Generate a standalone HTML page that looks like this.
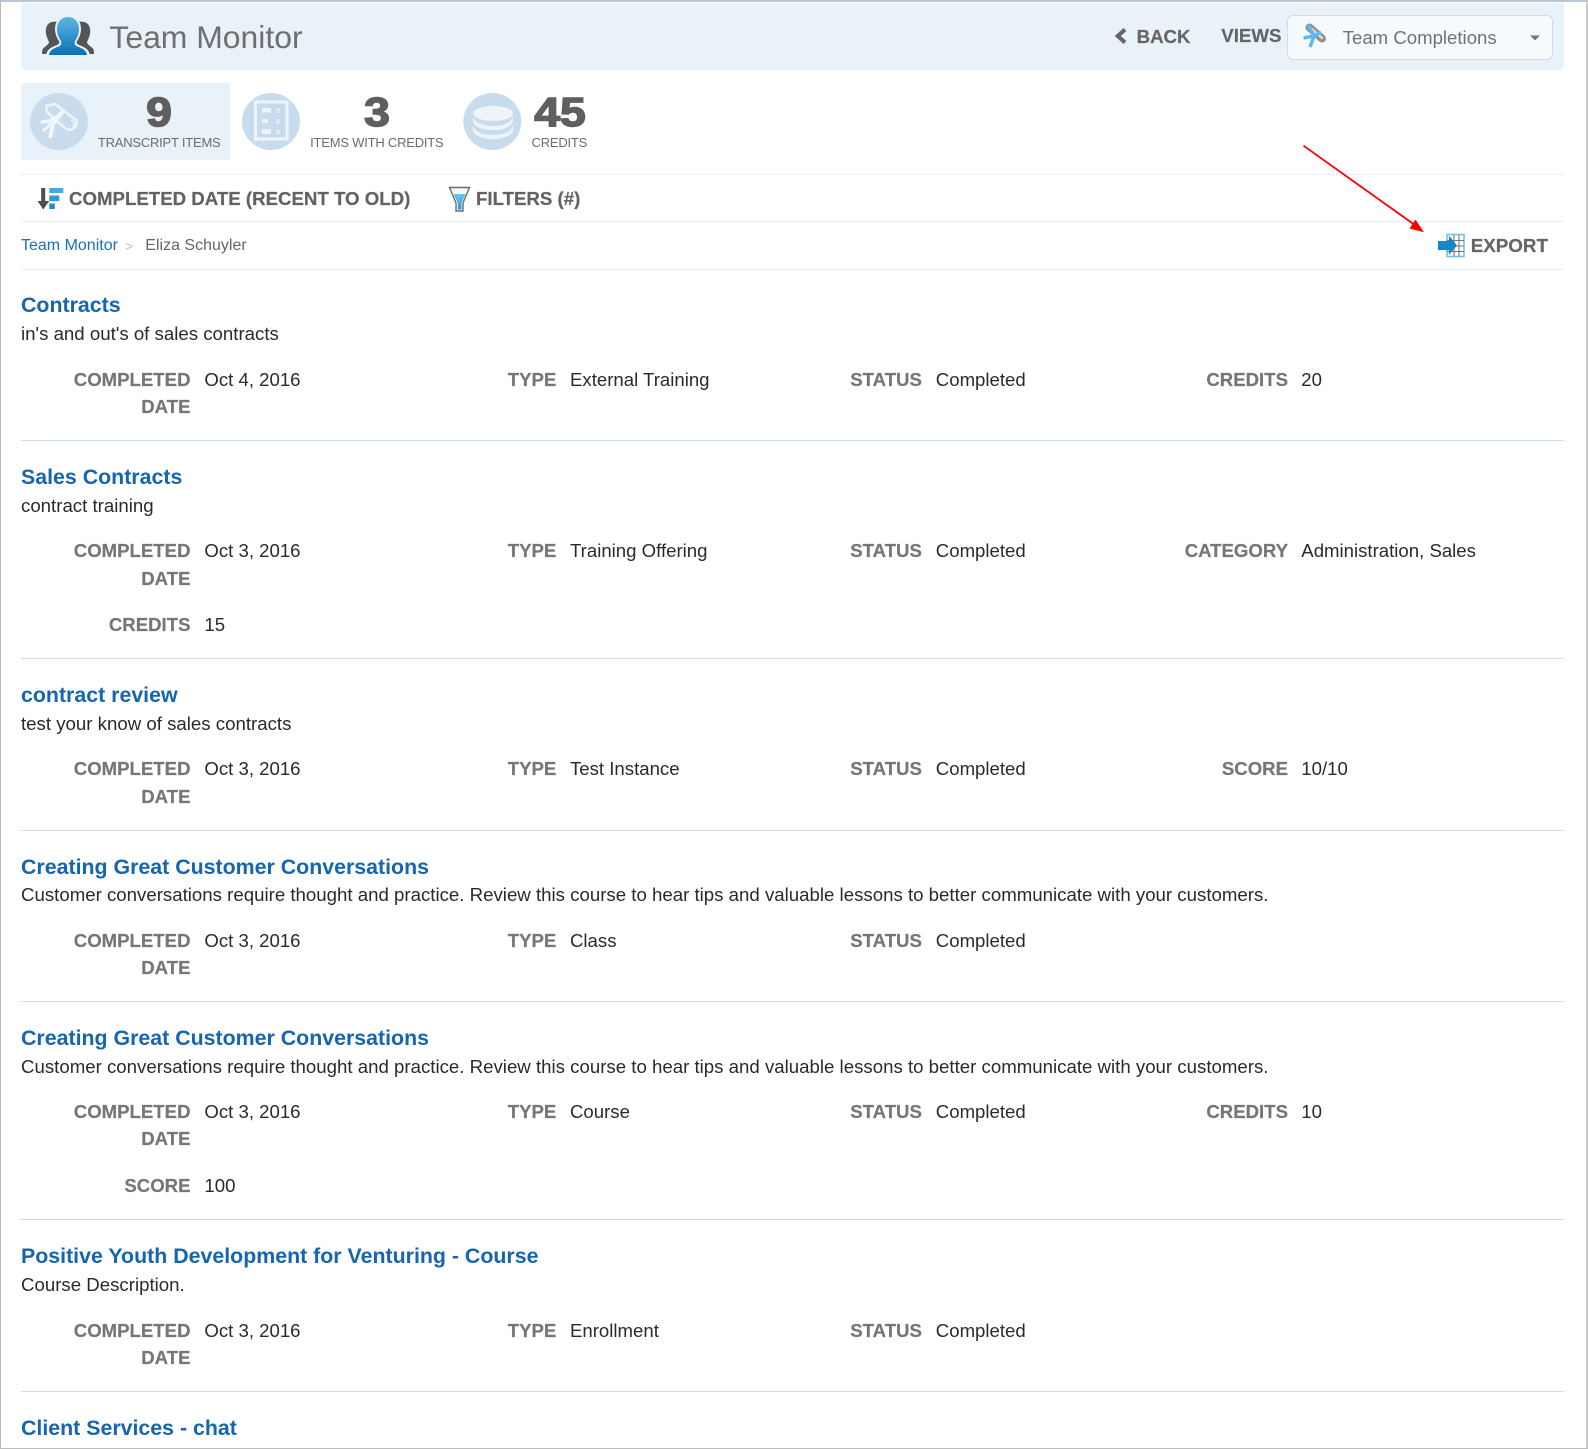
<!DOCTYPE html>
<html><head><meta charset="utf-8"><title>Team Monitor</title>
<style>
html,body{margin:0;padding:0;width:1588px;height:1449px;overflow:hidden;background:#fff}
body{position:relative;font-family:"Liberation Sans",Arial,sans-serif}
.a,.i>span,.a2{position:absolute;white-space:nowrap;line-height:0}
.b{position:absolute}
.i{position:absolute;left:0;width:1588px;height:1px}
.hr{position:absolute;left:21px;width:1543px;height:1px;background:#cfdfee}
.t{left:21px;top:36.6px;font-size:21.35px;font-weight:bold;color:#1565b0}
.d{left:21px;top:65.3px;font-size:18.65px;color:#2a2a2a}
.l{font-size:18.6px;font-weight:bold;color:#767676;transform:translateX(-100%);-webkit-text-stroke:.2px #767676}
.v{font-size:18.6px;color:#2a2a2a}
.c1{left:190.5px}.c2{left:556.3px}.c3{left:921.9px}.c4{left:1288px}
.w1{left:204.4px}.w2{left:570px}.w3{left:935.8px}.w4{left:1301.3px}
.r1{top:111px}.r2{top:137.8px}.r3{top:185px}
.p{margin-top:1px}.m{margin-top:-1px}
.sep{position:absolute;left:21px;width:1543px;height:1px;background:#e8eff6}
.num{font-size:41px;font-weight:bold;color:#5f5f5f;-webkit-text-stroke:1.5px #5f5f5f;transform:translateX(-50%) scaleX(1.13)}
.lab{font-size:13px;letter-spacing:-.22px;color:#6c6c6c;transform:translateX(-50%)}
.bold{font-size:18.67px;font-weight:bold;color:#626262;-webkit-text-stroke:.2px #626262}
</style></head>
<body>
<div class="b" style="left:0;top:0;width:1588px;height:2px;background:#b9c7d5"></div>
<div class="b" style="left:0;top:0;width:1px;height:1449px;background:#bbb"></div>
<div class="b" style="left:1586px;top:0;width:2px;height:1449px;background:#c9c9c9"></div>
<div class="b" style="left:0;top:1448px;width:1588px;height:1px;background:#bbb"></div>

<div class="b" style="left:21px;top:3px;width:1543px;height:67px;background:#e9f1f9;border-radius:0 0 5px 5px"></div>
<span class="a" style="left:109.4px;top:36.8px;font-size:31.9px;color:#6f6f6f">Team Monitor</span>
<span class="a bold" style="left:1136.6px;top:37.3px;color:#666">BACK</span>
<span class="a bold" style="left:1221.3px;top:36.3px;color:#666">VIEWS</span>
<div class="b" style="left:1287px;top:15px;width:264px;height:43px;background:#f7fafd;border:1px solid #d5dce4;border-radius:6px"></div>
<span class="a" style="left:1342.7px;top:38.2px;font-size:18.6px;color:#6f7377">Team Completions</span>

<div class="b" style="left:21px;top:83px;width:209px;height:77px;background:#e9f1f9"></div>
<span class="a num" style="left:159.3px;top:112px">9</span>
<span class="a lab" style="left:159.2px;top:143px">TRANSCRIPT ITEMS</span>
<span class="a num" style="left:376.5px;top:112px">3</span>
<span class="a lab" style="left:376.8px;top:143px">ITEMS WITH CREDITS</span>
<span class="a num" style="left:559.5px;top:112px">45</span>
<span class="a lab" style="left:559.3px;top:143px">CREDITS</span>

<div class="sep" style="top:174px"></div>
<div class="sep" style="top:221px"></div>
<div class="sep" style="top:269px"></div>
<span class="a bold" style="left:69px;top:199.3px">COMPLETED DATE (RECENT TO OLD)</span>
<span class="a bold" style="left:476px;top:199.3px">FILTERS (#)</span>
<span class="a" style="left:21px;top:246.3px;font-size:16px;color:#1a6fb8">Team Monitor</span>
<span class="a" style="left:125px;top:246.3px;font-size:14px;color:#c4c4c4">&gt;</span>
<span class="a" style="left:145.3px;top:246.3px;font-size:16px;color:#666">Eliza Schuyler</span>
<span class="a bold" style="left:1470.7px;top:246.3px;font-size:18.8px;color:#666">EXPORT</span>

<svg class="b" style="left:0;top:0" width="1588" height="1449" viewBox="0 0 1588 1449">
<defs>
<linearGradient id="g1" x1="0" y1="0" x2="0" y2="1"><stop offset="0" stop-color="#5cb6e2"/><stop offset="1" stop-color="#0a72b6"/></linearGradient>
<linearGradient id="g2" x1="0" y1="0" x2="0" y2="1"><stop offset="0" stop-color="#6cc6f0"/><stop offset="1" stop-color="#2a98d6"/></linearGradient>
</defs>
<!-- people -->
<path d="M52 22c-5 1-7 6-6 12 1 4 2 6 3 8 0 2-2 3-4 5-2 1-3 3-3 6v1h22V24c-3-2-8-3-12-2z" fill="#565656"/>
<path d="M84 22c5 1 7 6 6 12-1 4-2 6-3 8 0 2 2 3 4 5 2 1 3 3 3 6v1H72V24c3-2 8-3 12-2z" fill="#565656"/>
<path d="M68 16c-7 0-12 5-12 13 0 5 2 9 4 12 1 2 0 4-3 5-5 2-9 4-10 9h42c-1-5-5-7-10-9-3-1-4-3-3-5 2-3 4-7 4-12 0-8-5-13-12-13z" fill="#eaf2f9" stroke="#eaf2f9" stroke-width="2"/>
<path d="M68 17c-6.500 0-11 5-11 12 0 5 2 9 4 12 1 3 0 5-4 6-4 2-7 3-8 8h38c-1-5-4-6-8-8-4-1-5-3-4-6 2-3 4-7 4-12 0-7-4.500-12-11-12z" fill="url(#g1)"/>
<!-- circles -->
<ellipse cx="59" cy="121.500" rx="29" ry="28.500" fill="#c9dcee"/>
<ellipse cx="271" cy="121.500" rx="29" ry="28.500" fill="#c9dcee"/>
<ellipse cx="492.300" cy="121.500" rx="29" ry="28.500" fill="#c9dcee"/>
<!-- certificate -->
<path d="M46 106L55 104L76 120Q78 126 72 129Q69 131 65 128L47 112Z" fill="none" stroke="#eef4fa" stroke-width="2.500"/>
<path d="M71 121c3 0 4 3 2 6" fill="none" stroke="#eef4fa" stroke-width="1.500"/>
<path d="M64 110Q56 118 50 121L41 122" fill="none" stroke="#f1f6fb" stroke-width="3.500"/>
<path d="M64 110L53 124L50 138" fill="none" stroke="#f1f6fb" stroke-width="4"/>
<path d="M52 123L43 131" fill="none" stroke="#f1f6fb" stroke-width="3"/>
<!-- checklist -->
<rect x="255.500" y="102" width="31.500" height="37" fill="none" stroke="#eef4fa" stroke-width="3"/>
<g fill="#eef4fa"><rect x="262" y="108" width="9" height="4.500"/><rect x="262" y="119" width="6" height="4"/><rect x="262" y="129" width="9" height="5"/></g>
<g fill="#dbe7f3" stroke="#c0d3e6" stroke-width="1"><rect x="275" y="107.500" width="6.500" height="6.500"/><rect x="275" y="118.500" width="6.500" height="6.500"/><rect x="275" y="128.500" width="6.500" height="6.500"/></g>
<!-- coins -->
<ellipse cx="493" cy="113.500" rx="20" ry="7.500" fill="#eef4fa"/>
<path d="M473 116c1 7 10 10 20 10s19-3 20-10v5c-1 6-10 9-20 9s-19-3-20-9z" fill="#eef4fa"/>
<path d="M473 125c1 7 10 10 20 10s19-3 20-10v5c-1 6-10 9-20 9s-19-3-20-9z" fill="#eef4fa"/>
<!-- sort -->
<path d="M41.200 188h4v13h4l-6 8.500L37.500 201h3.700z" fill="#4d4d4d"/>
<rect x="49.300" y="188" width="14" height="5" fill="#45a9dd"/>
<rect x="49.300" y="195.500" width="10" height="5.500" fill="#2f9ad6"/>
<rect x="49.300" y="203.500" width="5.500" height="5.500" fill="#1f8acb"/>
<!-- funnel -->
<path d="M449.500 187.500H469.500L463 203V211H456V203Z" fill="#f4f7fa" stroke="#6a6a6a" stroke-width="1.400"/>
<path d="M453.500 194H465.500L461.500 203V209.500H457.800V203Z" fill="url(#g2)"/>
<!-- back chevron -->
<path d="M1125 29.500L1117.800 36L1125 42.500" fill="none" stroke="#666" stroke-width="4.200"/>
<!-- wrench -->
<path d="M1309.500 27.500L1322 38.500" stroke="#8f8f8f" stroke-width="8" stroke-linecap="round"/>
<path d="M1310 27.500L1322 38" stroke="#dcdcdc" stroke-width="2.500" stroke-linecap="round"/>
<path d="M1303.500 38L1314 36L1321 32M1314 36L1310 47M1308 25L1314 36" fill="none" stroke="#5bbcec" stroke-width="3.500"/>
<!-- caret -->
<path d="M1530 35.500H1540L1535 40.500Z" fill="#777"/>
<!-- export -->
<rect x="1447" y="234.500" width="17" height="22" fill="#fff" stroke="#6cc0ea" stroke-width="1.500"/>
<path d="M1454 235V256M1459 235V256M1447 240.500H1464M1447 246H1464M1447 251.500H1464" stroke="#777" stroke-width="1.100"/>
<path d="M1438 241H1449V235.500L1457 245.500L1449 255V250H1438Z" fill="#1487c6"/>
<!-- red arrow -->
<path d="M1303.500 145.700L1417 226.500" stroke="#f00" stroke-width="1.800"/>
<path d="M1424 232.300L1409.500 228.500L1415.500 219.500Z" fill="#f00"/>
</svg>

<div class="i" style="top:268px">
<span class="t">Contracts</span><span class="d p">in's and out's of sales contracts</span>
<span class="l c1 r1 p">COMPLETED</span><span class="l c1 r2 p">DATE</span><span class="v w1 r1 p">Oct 4, 2016</span>
<span class="l c2 r1 p">TYPE</span><span class="v w2 r1 p">External Training</span>
<span class="l c3 r1 p">STATUS</span><span class="v w3 r1 p">Completed</span>
<span class="l c4 r1 p">CREDITS</span><span class="v w4 r1 p">20</span>
</div>
<div class="hr" style="top:440px"></div>

<div class="i" style="top:440px">
<span class="t">Sales Contracts</span><span class="d p">contract training</span>
<span class="l c1 r1">COMPLETED</span><span class="l c1 r2 p">DATE</span><span class="v w1 r1">Oct 3, 2016</span>
<span class="l c2 r1">TYPE</span><span class="v w2 r1">Training Offering</span>
<span class="l c3 r1">STATUS</span><span class="v w3 r1">Completed</span>
<span class="l c4 r1">CATEGORY</span><span class="v w4 r1">Administration, Sales</span>
<span class="l c1 r3">CREDITS</span><span class="v w1 r3">15</span>
</div>
<div class="hr" style="top:658px"></div>

<div class="i" style="top:658.500px">
<span class="t">contract review</span><span class="d">test your know of sales contracts</span>
<span class="l c1 r1 m">COMPLETED</span><span class="l c1 r2 p">DATE</span><span class="v w1 r1 m">Oct 3, 2016</span>
<span class="l c2 r1 m">TYPE</span><span class="v w2 r1 m">Test Instance</span>
<span class="l c3 r1 m">STATUS</span><span class="v w3 r1 m">Completed</span>
<span class="l c4 r1 m">SCORE</span><span class="v w4 r1 m">10/10</span>
</div>
<div class="hr" style="top:830px"></div>

<div class="i" style="top:830.500px">
<span class="t">Creating Great Customer Conversations</span><span class="d" style="top:64.6px">Customer conversations require thought and practice. Review this course to hear tips and valuable lessons to better communicate with your customers.</span>
<span class="l c1 r1 m">COMPLETED</span><span class="l c1 r2">DATE</span><span class="v w1 r1 m">Oct 3, 2016</span>
<span class="l c2 r1 m">TYPE</span><span class="v w2 r1 m">Class</span>
<span class="l c3 r1 m">STATUS</span><span class="v w3 r1 m">Completed</span>
</div>
<div class="hr" style="top:1001px"></div>

<div class="i" style="top:1001.700px">
<span class="t">Creating Great Customer Conversations</span><span class="d">Customer conversations require thought and practice. Review this course to hear tips and valuable lessons to better communicate with your customers.</span>
<span class="l c1 r1 m">COMPLETED</span><span class="l c1 r2">DATE</span><span class="v w1 r1 m">Oct 3, 2016</span>
<span class="l c2 r1 m">TYPE</span><span class="v w2 r1 m">Course</span>
<span class="l c3 r1 m">STATUS</span><span class="v w3 r1 m">Completed</span>
<span class="l c4 r1 m">CREDITS</span><span class="v w4 r1 m">10</span>
<span class="l c1 r3 m">SCORE</span><span class="v w1 r3 m">100</span>
</div>
<div class="hr" style="top:1219px"></div>

<div class="i" style="top:1219.700px">
<span class="t">Positive Youth Development for Venturing - Course</span><span class="d">Course Description.</span>
<span class="l c1 r1">COMPLETED</span><span class="l c1 r2 p">DATE</span><span class="v w1 r1">Oct 3, 2016</span>
<span class="l c2 r1">TYPE</span><span class="v w2 r1">Enrollment</span>
<span class="l c3 r1">STATUS</span><span class="v w3 r1">Completed</span>
</div>
<div class="hr" style="top:1391px"></div>

<div class="i" style="top:1391.500px">
<span class="t">Client Services - chat</span>
</div>
</body></html>
